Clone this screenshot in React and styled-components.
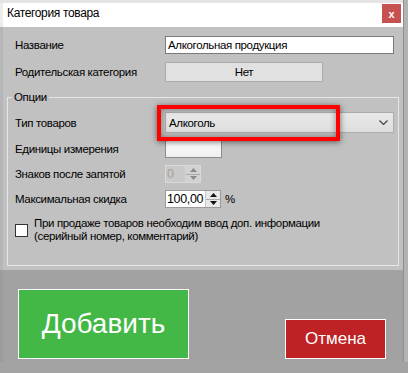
import React from 'react'
import styled, { createGlobalStyle } from 'styled-components'

const GlobalStyle = createGlobalStyle`
  html, body { margin: 0; padding: 0; }
  body {
    background: #a3a3a3;
    font-family: "Liberation Sans", Arial, sans-serif;
    font-size: 11.5px;
    letter-spacing: -0.35px;
    color: #000;
  }
  * { box-sizing: border-box; }
`

const Screen = styled.div`
  width: 408px;
  height: 373px;
  display: flex;
  overflow: hidden;
  background: #a3a3a3;
`

const Window = styled.div`
  width: 403px;
  height: 362px;
  flex-shrink: 0;
  display: flex;
  flex-direction: column;
  border-top: 3px solid #e4e4e4;
`

const Side = styled.div`
  flex: 1;
  height: 362px;
  background: #b3b3b3;
  border-left: 1px solid #8f8f8f;
`

const TitleBar = styled.div`
  height: 24px;
  background: #fff;
  border-left: 3px solid #ececec;
  display: flex;
  align-items: flex-start;
  justify-content: space-between;
  padding: 0 2px 0 4px;
`

const Title = styled.span`
  line-height: 20px;
  font-size: 12px;
`

const CloseButton = styled.div`
  width: 19px;
  height: 19px;
  margin-top: 1px;
  background: #c75050;
  color: #fff;
  font-weight: bold;
  font-size: 11px;
  letter-spacing: 0;
  display: flex;
  align-items: center;
  justify-content: center;
`

const Panel = styled.div`
  height: 243px;
  background: #c1c1c1;
  border-left: 3px solid #b6b6b6;
  padding: 9px 4px 0 4px;
`

const TopRows = styled.div`
  padding-left: 8px;
`

const Row = styled.div`
  display: flex;
  align-items: center;
  height: ${p => p.h}px;
  margin-top: ${p => p.mt || 0}px;
`

const Label = styled.span`
  width: 150px;
  flex-shrink: 0;
  white-space: nowrap;
`

const TextInput = styled.div`
  width: 229px;
  height: 18px;
  background: #fff;
  border: 1px solid #7a7a7a;
  padding-left: 2px;
  line-height: 16px;
  white-space: nowrap;
`

const FlatButton = styled.div`
  width: 158px;
  height: 20px;
  background: #e1e1e1;
  border: 1px solid #adadad;
  display: flex;
  align-items: center;
  justify-content: center;
`

const Group = styled.fieldset`
  margin: 7px 0 0 0;
  padding: 7px 0 22px 7px;
  border: 1px solid #e6e6e6;
  min-width: 0;
`

const Legend = styled.legend`
  padding: 0 2px;
  margin-left: -3px;
  line-height: 16px;
`

const ComboWrap = styled.div`
  position: relative;
`

const Combo = styled.div`
  width: 229px;
  height: 21px;
  background: linear-gradient(#e8e8e8, #dedede);
  border: 1px solid #acacac;
  display: flex;
  align-items: center;
  justify-content: space-between;
  padding: 0 5px 0 3px;
`

const Highlight = styled.div`
  position: absolute;
  left: -8px;
  top: -7px;
  width: 183px;
  height: 36px;
  border: 4px solid #ff0000;
  box-shadow: 0 1px 6px rgba(0, 0, 0, 0.55), inset 0 0 6px rgba(0, 0, 0, 0.4);
  pointer-events: none;
`

const UnitBox = styled.div`
  width: 57px;
  height: 18px;
  background: linear-gradient(#fff, #f0f0f0);
  border: 1px solid #8c8c8c;
`

const Spin = styled.div`
  width: ${p => p.w}px;
  height: 18px;
  display: flex;
  background: ${p => (p.disabled ? '#c9c9c9' : '#fff')};
  border: 1px solid ${p => (p.disabled ? '#d9d9d9' : '#9a9a9a')};
`

const SpinText = styled.span`
  flex: 1;
  padding-left: 1px;
  line-height: 16px;
  font-size: 12.5px;
  color: ${p => (p.disabled ? '#a8a092' : '#000')};
`

const SpinButtons = styled.div`
  width: 15px;
  display: flex;
  flex-direction: column;
  border-left: 1px solid ${p => (p.disabled ? '#d4d4d4' : '#c9c9c9')};
  background: ${p => (p.disabled ? '#d2d2d2' : '#e8e8e8')};
`

const SpinHalf = styled.div`
  flex: 1;
  display: flex;
  align-items: center;
  justify-content: center;
  & + & {
    border-top: 1px solid ${p => (p.disabled ? '#bdbdbd' : '#a9a9a9')};
  }
`

const Percent = styled.span`
  margin-left: 4px;
`

const CheckRow = styled.div`
  display: flex;
  align-items: center;
  margin-top: 9px;
`

const CheckBox = styled.div`
  width: 13px;
  height: 13px;
  flex-shrink: 0;
  background: #fff;
  border: 1px solid #333;
  margin-right: 6px;
`

const CheckText = styled.span`
  line-height: 13px;
`

const Footer = styled.div`
  flex: 1;
  background: #a2a2a2;
  border-left: 3px solid #9c9c9c;
  display: flex;
  align-items: flex-end;
  justify-content: space-between;
  padding: 0 17px 3px 15px;
`

const BigButton = styled.div`
  width: ${p => p.w}px;
  height: ${p => p.h}px;
  background: ${p => p.bg};
  border: 1px solid #fff;
  color: #fff;
  font-size: ${p => p.fs}px;
  letter-spacing: 0;
  display: flex;
  align-items: center;
  justify-content: center;
`

const Arrow = ({ up, color }) => (
  <svg width="7" height="4" viewBox="0 0 7 4">
    <path d={up ? 'M0 4 L3.5 0 L7 4 Z' : 'M0 0 L3.5 4 L7 0 Z'} fill={color} />
  </svg>
)

const SpinBox = ({ value, width, disabled }) => (
  <Spin w={width} disabled={disabled}>
    <SpinText disabled={disabled}>{value}</SpinText>
    <SpinButtons disabled={disabled}>
      <SpinHalf disabled={disabled}><Arrow up color={disabled ? '#8a8a8a' : '#111'} /></SpinHalf>
      <SpinHalf disabled={disabled}><Arrow color={disabled ? '#8a8a8a' : '#111'} /></SpinHalf>
    </SpinButtons>
  </Spin>
)

const App = () => {
  return (
    <Screen>
      <GlobalStyle />
      <Window>
        <TitleBar>
          <Title>Категория товара</Title>
          <CloseButton>x</CloseButton>
        </TitleBar>
        <Panel>
          <TopRows>
            <Row h={18}>
              <Label>Название</Label>
              <TextInput>Алкогольная продукция</TextInput>
            </Row>
            <Row h={20} mt={8}>
              <Label>Родительская категория</Label>
              <FlatButton>Нет</FlatButton>
            </Row>
          </TopRows>
          <Group>
            <Legend>Опции</Legend>
            <Row h={21}>
              <Label>Тип товаров</Label>
              <ComboWrap>
                <Combo>
                  <span>Алкоголь</span>
                  <svg width="9" height="5" viewBox="0 0 9 5">
                    <path d="M0.5 0.5 L4.5 4.5 L8.5 0.5" fill="none" stroke="#444" strokeWidth="1.2" />
                  </svg>
                </Combo>
                <Highlight />
              </ComboWrap>
            </Row>
            <Row h={18} mt={7}>
              <Label>Единицы измерения</Label>
              <UnitBox />
            </Row>
            <Row h={18} mt={7}>
              <Label>Знаков после запятой</Label>
              <SpinBox value="0" width={36} disabled />
            </Row>
            <Row h={18} mt={7}>
              <Label>Максимальная скидка</Label>
              <SpinBox value="100,00" width={56} />
              <Percent>%</Percent>
            </Row>
            <CheckRow>
              <CheckBox />
              <CheckText>
                При продаже товаров необходим ввод доп. информации
                <br />
                (серийный номер, комментарий)
              </CheckText>
            </CheckRow>
          </Group>
        </Panel>
        <Footer>
          <BigButton w={171} h={70} bg="#43b847" fs={28}>Добавить</BigButton>
          <BigButton w={101} h={40} bg="#be2224" fs={17}>Отмена</BigButton>
        </Footer>
      </Window>
      <Side />
    </Screen>
  )
}

export default App
